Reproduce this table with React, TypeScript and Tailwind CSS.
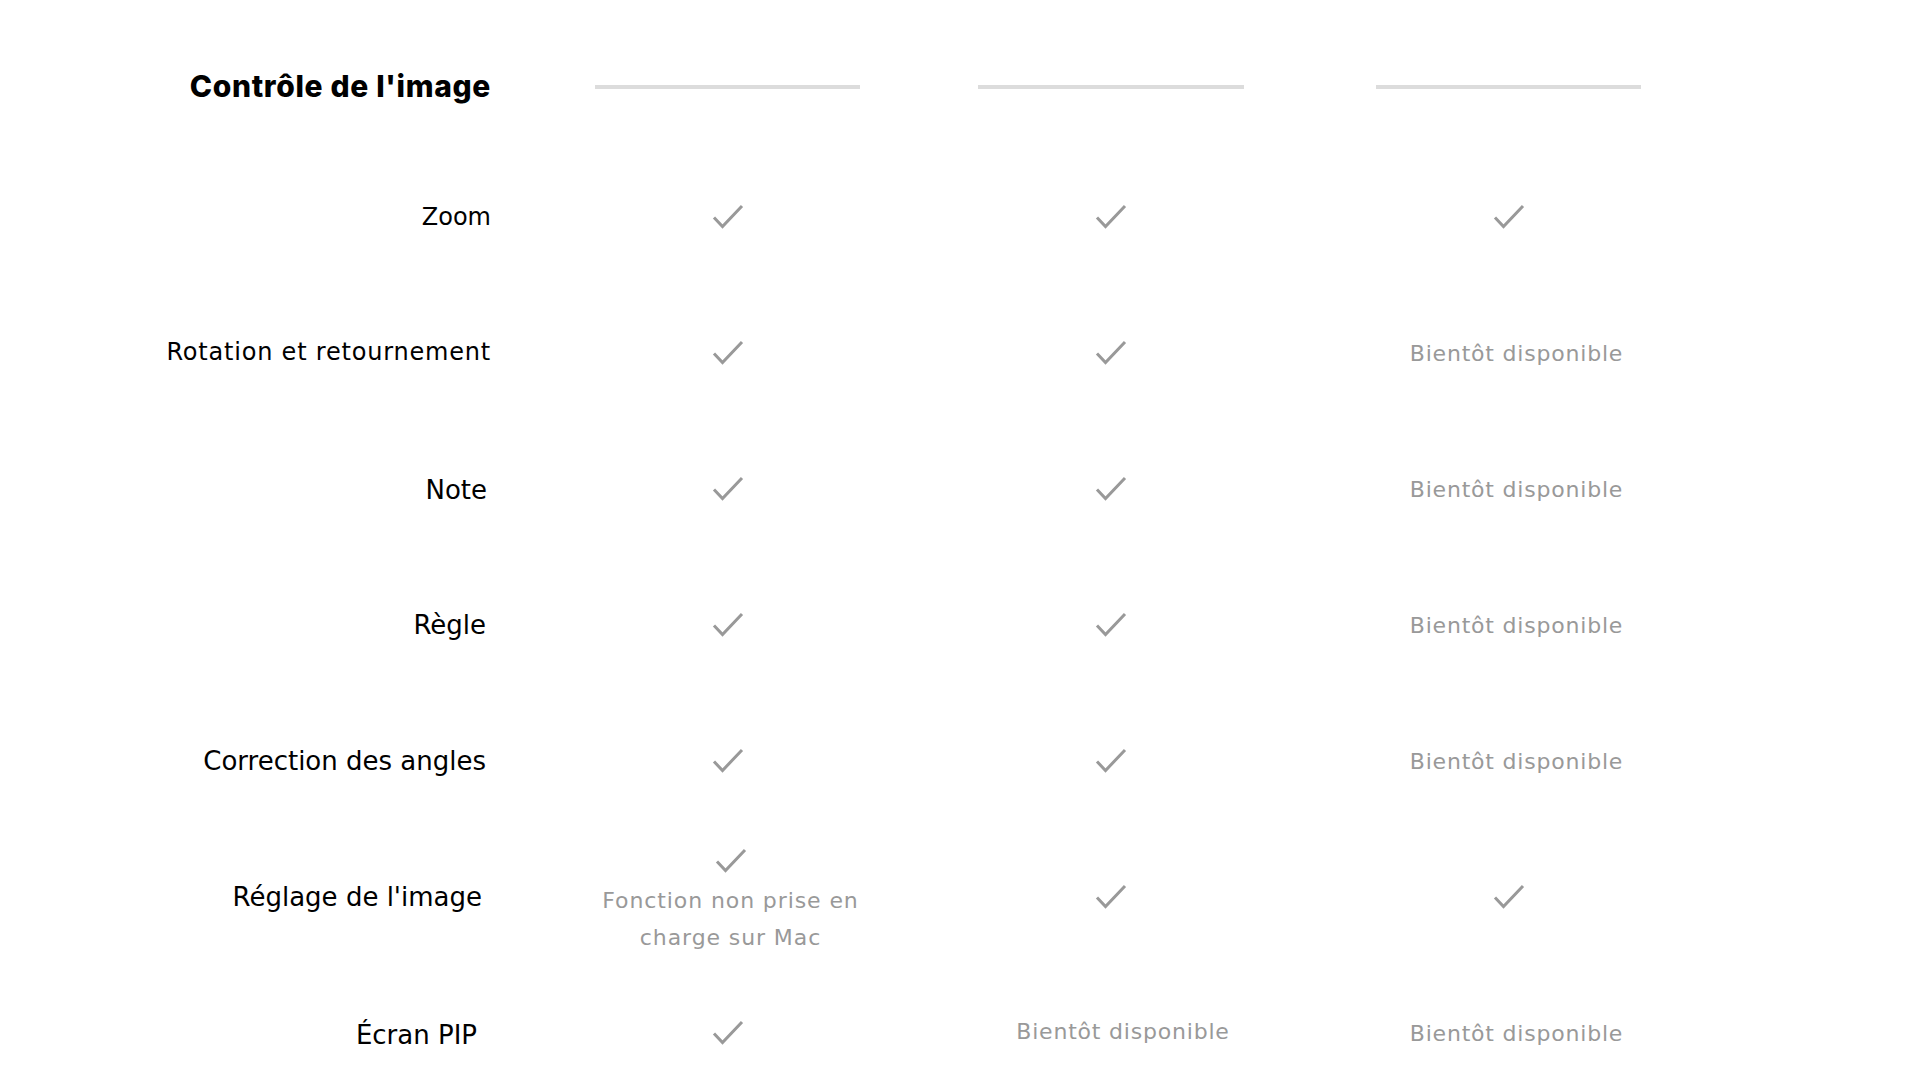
import React from "react";

const Check = () => (
  <svg width="32" height="26" viewBox="0 0 32 26" fill="none" className="block">
    <path d="M2 13.5 L10.5 22.5 L30 2" stroke="#999999" strokeWidth="3" strokeLinecap="butt" strokeLinejoin="miter" />
  </svg>
);

const Soon = () => (
  <span className="text-[22px] text-[#999999] leading-none tracking-[0.8px] whitespace-nowrap">Bientôt disponible</span>
);

type Cell = "check" | "soon" | "mac";

const rows: { label: string; size: string; pr: string; cells: Cell[] }[] = [
  { label: "Zoom", size: "text-[24px]", pr: "pr-0 pt-[2px]", cells: ["check", "check", "check"] },
  { label: "Rotation et retournement", size: "text-[24px] tracking-[0.8px]", pr: "pr-0", cells: ["check", "check", "soon"] },
  { label: "Note", size: "text-[26px]", pr: "pr-[4px] pt-[4px]", cells: ["check", "check", "soon"] },
  { label: "Règle", size: "text-[26px]", pr: "pr-[5px] pt-[2px]", cells: ["check", "check", "soon"] },
  { label: "Correction des angles", size: "text-[26px]", pr: "pr-[5px] pt-[2px]", cells: ["check", "check", "soon"] },
  { label: "Réglage de l'image", size: "text-[26px]", pr: "pr-[9px] pt-[2px]", cells: ["mac", "check", "check"] },
  { label: "Écran PIP", size: "text-[26px]", pr: "pr-[14px] pt-[7px]", cells: ["check", "soon", "soon"] },
];

const colW = ["w-[265px] ml-[104px]", "w-[266px] ml-[118px]", "w-[265px] ml-[132px]"];

function CellView({ c, i }: { c: Cell; i: number }) {
  if (c === "check") return <Check />;
  if (c === "soon")
    return (
      <div className={i === 2 ? "pl-[16px] pt-[4px]" : "pl-[24px]"}>
        <Soon />
      </div>
    );
  return (
    <div className="flex flex-col items-center pl-[6px] pt-[10px]">
      <Check />
      <div className="text-[22px] leading-[37px] tracking-[0.9px] text-[#999999] text-center mt-[8px] whitespace-nowrap">
        Fonction non prise en
        <br />
        charge sur Mac
      </div>
    </div>
  );
}

export default function App() {
  return (
    <div
      className="min-h-screen w-full bg-white text-black pt-[23px]"
      style={{ fontFamily: "'DejaVu Sans', sans-serif" }}
    >
      <div className="flex h-[126px] items-center">
        <div className="w-[491px] text-right">
          <h2
            className="text-[30px] font-extrabold leading-none tracking-[0.65px] text-black"
            style={{ fontFamily: "Inter, sans-serif" }}
          >
            Contrôle de l'image
          </h2>
        </div>
        {colW.map((w, i) => (
          <div key={i} className={`${w} h-[4px] mt-[2px] bg-[#dcdcdc]`} />
        ))}
      </div>
      {rows.map((r, ri) => (
        <div key={ri} className="flex h-[136px] items-center">
          <div className={`w-[491px] text-right ${r.pr}`}>
            <span className={`${r.size} leading-none text-black whitespace-nowrap`}>{r.label}</span>
          </div>
          {r.cells.map((c, i) => (
            <div key={i} className={`${colW[i]} flex justify-center items-center`}>
              <CellView c={c} i={i} />
            </div>
          ))}
        </div>
      ))}
    </div>
  );
}
